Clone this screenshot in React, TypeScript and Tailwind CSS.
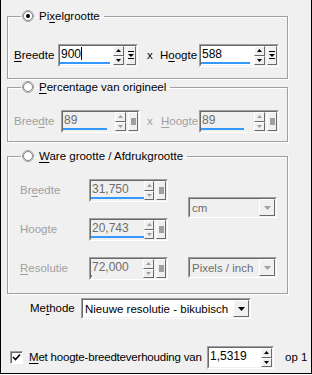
import React from "react";

const font = "font-['Liberation_Sans',Arial,sans-serif] text-[10.5px] leading-[13px]";

function U({ text, at }: { text: string; at: number }) {
    return (
        <>
            {text.slice(0, at)}
            <span className="underline underline-offset-[2px]">{text[at]}</span>
            {text.slice(at + 1)}
        </>
    );
}

function Radio({ checked }: { checked?: boolean }) {
    return (
        <svg width="12" height="12" viewBox="0 0 12 12" className="shrink-0">
            <circle cx="6" cy="6" r="5.5" fill="#fff" stroke="#a0a0a0" />
            <circle cx="6" cy="6" r="4.5" fill="#fff" stroke="#696969" strokeWidth="0.8" />
            {checked && <circle cx="6" cy="6" r="2" fill="#000" />}
        </svg>
    );
}

function Tri({ up, color }: { up?: boolean; color: string }) {
    return (
        <svg width="5" height="3" viewBox="0 0 5 3">
            <path d={up ? "M2.5 0 L5 3 L0 3 Z" : "M0 0 L5 0 L2.5 3 Z"} fill={color} />
        </svg>
    );
}

function RaisedBtn({ children, className = "" }: { children?: React.ReactNode; className?: string }) {
    return (
        <div className={`flex items-center justify-center bg-[#f0f0f0] border border-t-white border-l-white border-r-[#696969] border-b-[#696969] ${className}`}>
            {children}
        </div>
    );
}

function SpinBox({
    value,
    bar,
    disabled,
    extra = true,
    width = "w-[80px]",
}: {
    value: string;
    bar?: number;
    disabled?: boolean;
    extra?: boolean;
    width?: string;
}) {
    const c = disabled ? "#a0a0a0" : "#000";
    return (
        <div className={`${width} h-[23px] shrink-0 border border-t-[#a0a0a0] border-l-[#a0a0a0] border-r-white border-b-white`}>
            <div className="flex h-full border border-t-[#696969] border-l-[#696969] border-r-[#f0f0f0] border-b-[#f0f0f0]">
                <div className={`flex flex-1 flex-col ${disabled ? "bg-[#f0f0f0]" : "bg-white"}`}>
                    <div className={`flex-1 pl-[1px] pt-[1px] text-[12px] leading-[14px] ${disabled ? "text-[#6d6d6d]" : "text-black"}`}>
                        {value}
                        {!disabled && value === "900" && <span className="inline-block w-px h-[13px] bg-black align-top" />}
                    </div>
                    {bar !== undefined && (
                        <div className="h-[2px] mb-[1px] bg-[#3399ff]" style={{ width: `${bar}px` }} />
                    )}
                </div>
                <div className="flex w-[11px] flex-col">
                    <RaisedBtn className="h-1/2">
                        <Tri up color={c} />
                    </RaisedBtn>
                    <RaisedBtn className="h-1/2">
                        <Tri color={c} />
                    </RaisedBtn>
                </div>
                {extra && (
                    <RaisedBtn className="ml-[2px] w-[10px]">
                        {disabled ? (
                            <div className="w-[5px] h-[7px] bg-[#a0a0a0]" />
                        ) : (
                            <svg width="6" height="9" viewBox="0 0 6 9">
                                <rect x="0" y="0" width="6" height="1" fill="#000" />
                                <path d="M0 3 L6 3 L3 6 Z" fill="#000" />
                                <rect x="0" y="7" width="6" height="1" fill="#000" />
                            </svg>
                        )}
                    </RaisedBtn>
                )}
            </div>
        </div>
    );
}

function Select({ value, disabled, width }: { value: string; disabled?: boolean; width: string }) {
    return (
        <div className={`${width} h-[21px] border border-t-[#a0a0a0] border-l-[#a0a0a0] border-r-white border-b-white`}>
            <div className={`flex h-full border border-t-[#696969] border-l-[#696969] border-r-[#f0f0f0] border-b-[#f0f0f0] ${disabled ? "bg-[#f0f0f0]" : "bg-white"}`}>
                <div className={`flex-1 pl-[2px] pt-[2px] text-[11.5px] leading-[14px] ${disabled ? "text-[#6d6d6d]" : "text-black"}`}>
                    {value}
                </div>
                <RaisedBtn className="w-[16px]">
                    <svg width="7" height="4" viewBox="0 0 7 4">
                        <path d="M0 0 L7 0 L3.5 4 Z" fill={disabled ? "#a0a0a0" : "#000"} />
                    </svg>
                </RaisedBtn>
            </div>
        </div>
    );
}

function Group({ label, checked, children, className = "" }: { label: React.ReactNode; checked?: boolean; children: React.ReactNode; className?: string }) {
    return (
        <fieldset className={`w-[281px] border border-[#a0a0a0] shadow-[1px_1px_0_#fff,inset_1px_1px_0_#fff] px-[6px] ${className}`}>
            <legend className="ml-[7px] px-[1px]">
                <div className="flex items-center gap-[5px] h-[14px] pr-[3px]">
                    <Radio checked={checked} />
                    <span className="text-black text-[11.5px]">{label}</span>
                </div>
            </legend>
            {children}
        </fieldset>
    );
}

export default function App() {
    return (
        <div className={`w-[312px] h-[374px] bg-[#f0f0f0] border-l border-r border-b border-black pl-[6px] pt-[9px] ${font}`}>
            <Group label={<U text="Pixelgrootte" at={2} />} checked className="pt-[21px] pb-[11px]">
                <div className="flex items-center text-[11.5px]">
                    <span className="w-[44px]"><U text="Breedte" at={0} /></span>
                    <SpinBox value="900" bar={50} width="w-[80px]" />
                    <span className="ml-[9px] w-[13px]">x</span>
                    <span className="w-[39px]"><U text="Hoogte" at={1} /></span>
                    <SpinBox value="588" bar={49} width="w-[80px]" />
                </div>
            </Group>

            <Group label={<U text="Percentage van origineel" at={0} />} className="mt-[1px] pt-[16px] pb-[8px]">
                <div className="flex items-center text-[11.5px] text-[#a0a0a0]">
                    <span className="w-[47px]"><U text="Breedte" at={4} /></span>
                    <SpinBox value="89" bar={44} disabled width="w-[79px]" />
                    <span className="ml-[7px] w-[14px]">x</span>
                    <span className="w-[38px]"><U text="Hoogte" at={0} /></span>
                    <SpinBox value="89" bar={43} disabled width="w-[80px]" />
                </div>
            </Group>

            <Group label={<U text="Ware grootte / Afdrukgrootte" at={0} />} className="mt-[7px] pt-[16px] pb-[13px]">
                <div className="flex pl-[6px] text-[11.5px] text-[#a0a0a0]">
                    <div className="flex flex-col gap-[16px]">
                        <div className="flex items-center">
                            <span className="w-[69px]"><U text="Breedte" at={2} /></span>
                            <SpinBox value="31,750" bar={53} disabled width="w-[79px]" />
                        </div>
                        <div className="flex items-center">
                            <span className="w-[69px]">Hoogte</span>
                            <SpinBox value="20,743" bar={53} disabled width="w-[79px]" />
                        </div>
                        <div className="flex items-center">
                            <span className="w-[69px]"><U text="Resolutie" at={0} /></span>
                            <SpinBox value="72,000" bar={1} disabled width="w-[79px]" />
                        </div>
                    </div>
                    <div className="ml-[20px] flex flex-col pt-[18px] gap-[39px]">
                        <Select value="cm" disabled width="w-[89px]" />
                        <Select value="Pixels / inch" disabled width="w-[89px]" />
                    </div>
                </div>
            </Group>

            <div className="mt-[4px] flex items-center text-[11.5px] text-black">
                <span className="ml-[23px] w-[51px]"><U text="Methode" at={2} /></span>
                <Select value="Nieuwe resolutie - bikubisch" width="w-[170px]" />
            </div>

            <div className="mt-[27px] flex items-center text-[11.5px] text-black">
                <div className="ml-[3px] flex h-[13px] w-[13px] shrink-0 items-center justify-center border border-t-[#a0a0a0] border-l-[#a0a0a0] border-r-white border-b-white bg-white shadow-[inset_1px_1px_0_#696969]">
                    <svg width="9" height="9" viewBox="0 0 9 9">
                        <path d="M1 4 L3.5 6.5 L8 1.5" fill="none" stroke="#000" strokeWidth="1.6" />
                    </svg>
                </div>
                <span className="ml-[6px] w-[178px] shrink-0 whitespace-nowrap tracking-[-0.2px]"><U text="Met hoogte-breedteverhouding van" at={0} /></span>
                <SpinBox value="1,5319" extra={false} width="w-[67px]" />
                <span className="ml-[11px]">op 1</span>
            </div>
        </div>
    );
}
